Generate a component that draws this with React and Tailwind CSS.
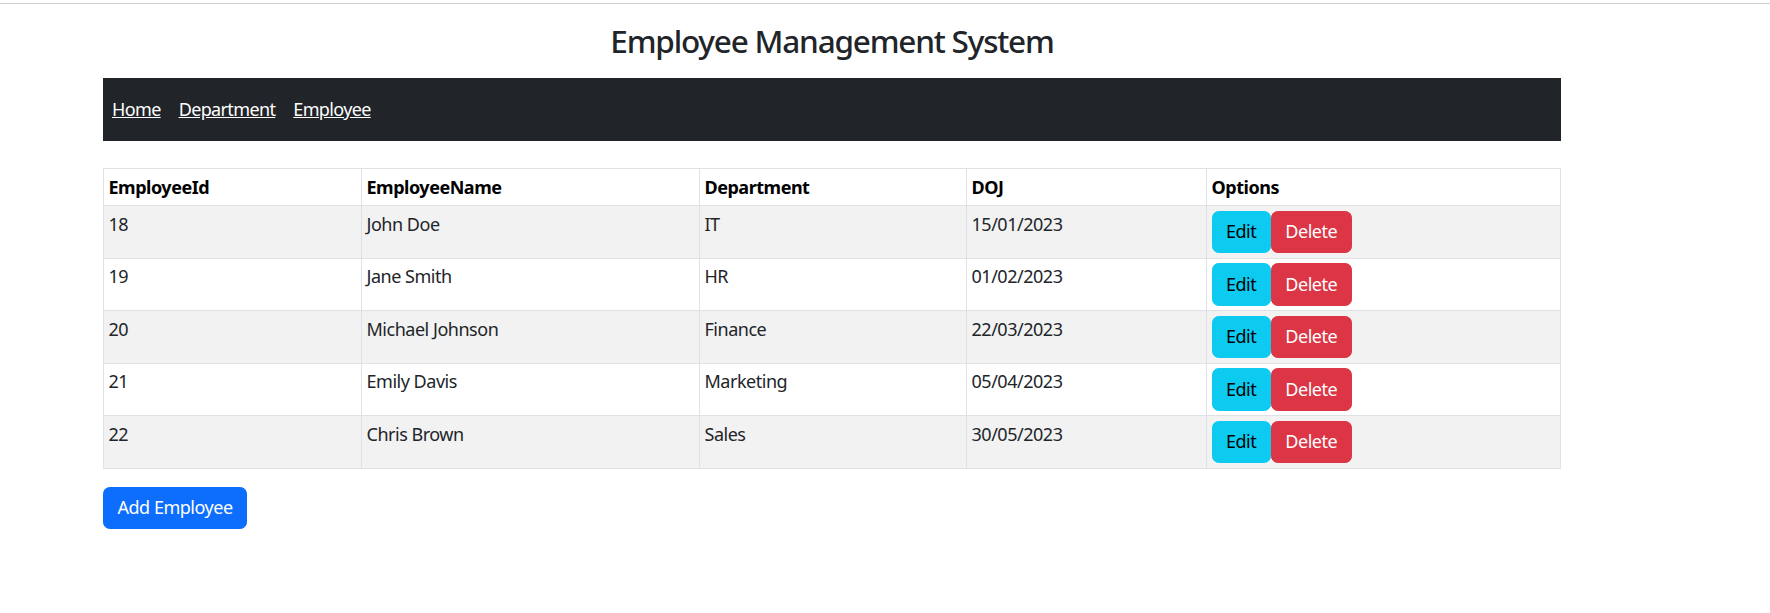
import React from "react";

const rows = [
  ["18", "John Doe", "IT", "15/01/2023"],
  ["19", "Jane Smith", "HR", "01/02/2023"],
  ["20", "Michael Johnson", "Finance", "22/03/2023"],
  ["21", "Emily Davis", "Marketing", "05/04/2023"],
  ["22", "Chris Brown", "Sales", "30/05/2023"],
];

export default function App() {
  return (
    <div className="min-h-[613px] bg-white text-[#212529] tracking-[-0.03em]" style={{ fontFamily: '"Noto Sans", "Open Sans", sans-serif' }}>
      <div className="h-[3px]" />
      <div className="border-t border-[#d0d0d0]" />
      <div className="ml-[103px] w-[1458px]">
        <h3 className="mt-[18px] mb-[18px] text-center text-[31.5px] leading-[38px] font-medium tracking-[-1.2px]">
          Employee Management System
        </h3>
        <nav className="flex h-[63px] items-center bg-[#212529] tracking-[-0.04em]">
          <a href="#" className="px-[9px] text-[18px] leading-[27px] text-white underline">Home</a>
          <a href="#" className="px-[9px] text-[18px] leading-[27px] text-white underline">Department</a>
          <a href="#" className="px-[9px] text-[18px] leading-[27px] text-white underline">Employee</a>
        </nav>
        <table className="mt-[27px] w-full table-fixed border-collapse text-[18px] leading-[27px]">
          <colgroup>
            <col className="w-[258px]" />
            <col className="w-[338px]" />
            <col className="w-[267px]" />
            <col className="w-[240px]" />
            <col />
          </colgroup>
          <thead>
            <tr>
              {["EmployeeId", "EmployeeName", "Department", "DOJ", "Options"].map((h) => (
                <th key={h} className="border border-[#dee2e6] p-[4.5px] text-left align-top font-bold text-black">
                  {h}
                </th>
              ))}
            </tr>
          </thead>
          <tbody>
            {rows.map((r, i) => (
              <tr key={r[0]} className={i % 2 === 0 ? "bg-[#f2f2f2]" : "bg-white"}>
                {r.map((c, j) => (
                  <td key={j} className="border border-[#dee2e6] p-[4.5px] align-top">
                    {c}
                  </td>
                ))}
                <td className="border border-[#dee2e6] p-[4.5px] align-top">
                  <button className="rounded-[6.75px] border border-[#0dcaf0] bg-[#0dcaf0] px-[13.5px] py-[6.75px] text-[18px] leading-[27px] text-black">Edit</button><button className="rounded-[6.75px] border border-[#dc3545] bg-[#dc3545] px-[13.5px] py-[6.75px] text-[18px] leading-[27px] text-white">Delete</button>
                </td>
              </tr>
            ))}
          </tbody>
        </table>
        <button className="mt-[18px] rounded-[6.75px] border border-[#0d6efd] bg-[#0d6efd] px-[13.5px] py-[6.75px] text-[18px] leading-[27px] text-white">
          Add Employee
        </button>
      </div>
    </div>
  );
}
